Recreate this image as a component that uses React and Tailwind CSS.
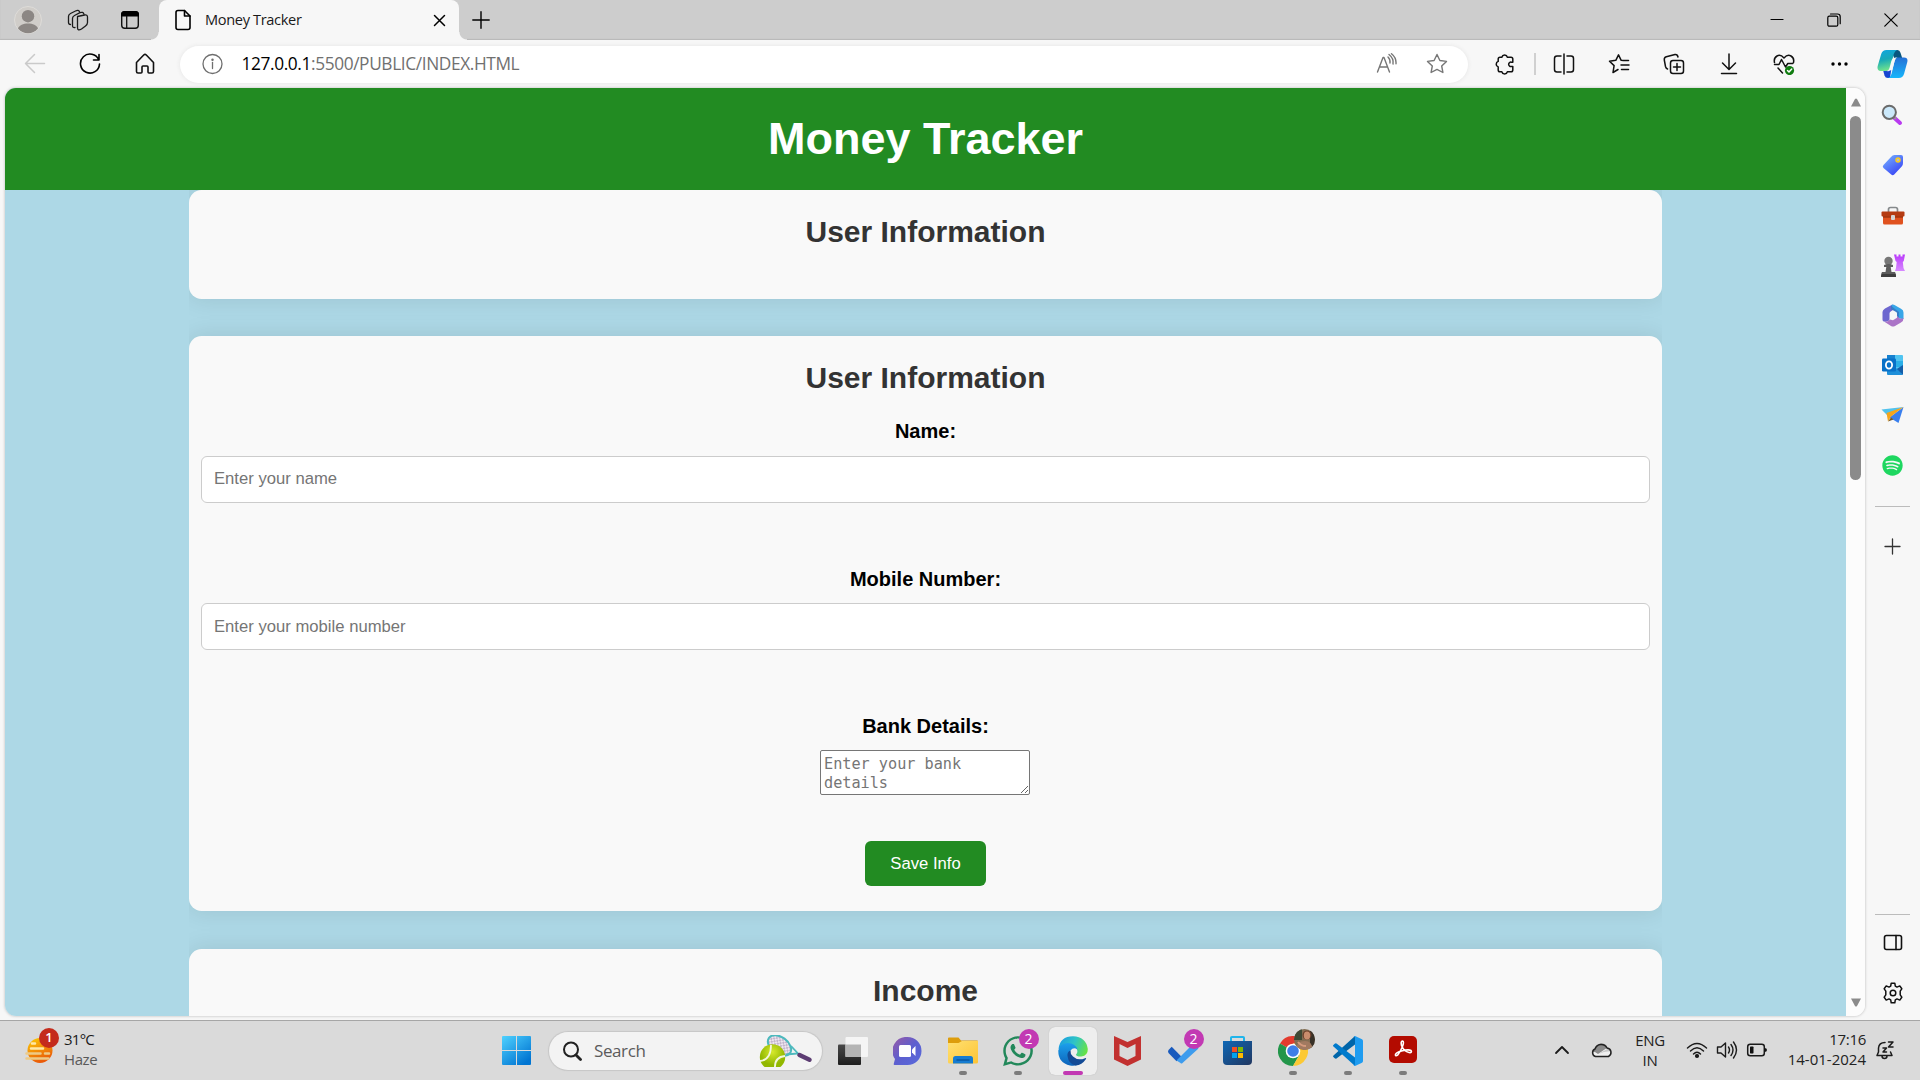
import React from "react";
import { FaSpotify, FaWhatsapp } from "react-icons/fa";

const UI = "font-['Open_Sans','Noto_Sans',sans-serif]";

/* Line icon wrapper: stroke-based svg at its natural pixel size */
function Line({ w = 22, h = 22, sw = 1.4, color = "#1b1b1b", children, className = "" }) {
  return (
    <svg width={w} height={h} viewBox={`0 0 ${w} ${h}`} fill="none" stroke={color} strokeWidth={sw} strokeLinecap="round" strokeLinejoin="round" className={`shrink-0 ${className}`}>
      {children}
    </svg>
  );
}

function Cell({ className, children }) {
  return <div className={`flex shrink-0 items-center justify-center ${className}`}>{children}</div>;
}

/* ---------- Browser title bar ---------- */
function TabStrip() {
  return (
    <div className="flex h-[40px] shrink-0 bg-[#cdcdcd] shadow-[inset_0_-1px_1px_#b9b9b9]">
      <Cell className="w-[56px]">
        <svg width="28" height="28" viewBox="0 0 28 28">
          <circle cx="14" cy="14" r="13.5" fill="#d0cdc9" stroke="#dedcd9" />
          <circle cx="14" cy="10.2" r="6.2" fill="#8c8784" />
          <path d="M4 22.5c1.500-3.500 5-5 10-5s8.500 1.500 10 5a13 13 0 0 1-20 0z" fill="#8c8784" />
        </svg>
      </Cell>
      <Cell className="w-[43px]">
        <Line w={22} h={22} sw={1.3}>
          <path d="M10.500 7.500 17.500 6q3-.6 3 2v5.500q0 2-2 3.500l-4 3q-4 2.300-4-1.500V11q0-2.500 0-3.500z" />
          <path d="M8 18.500q-2.500.5-2.500-2V9.500q0-2 2-3L13 3.700q3-1.200 4 1.500" />
          <path d="M3.500 15.500Q1.500 15.500 1.500 13.500V7.500q0-2 2-3L8.500 2q3-1.500 4 .8" />
        </Line>
      </Cell>
      <Cell className="w-[60px]">
        <svg width="20" height="20" viewBox="0 0 20 20" className="ml-0.5">
          <rect x="1.700" y="1.700" width="16.600" height="16.600" rx="3" fill="none" stroke="#111" strokeWidth="1.400" />
          <path d="M1 6.500V4.500Q1 1 4.500 1h11Q19 1 19 4.500v2z" fill="#000" />
          <path d="M6.700 6v12" stroke="#111" strokeWidth="1.300" />
        </svg>
      </Cell>
      <div className="relative flex w-[300px] shrink-0 items-center rounded-t-[8px] bg-[#f7f7f7] pr-[13px] pl-[15px]">
        <span className="absolute bottom-0 left-[-8px] size-2 bg-[radial-gradient(circle_at_0_0,#cdcdcd_7px,#f7f7f7_8px)]" />
        <span className="absolute right-[-8px] bottom-0 size-2 bg-[radial-gradient(circle_at_100%_0,#cdcdcd_7px,#f7f7f7_8px)]" />
        <Line w={18} h={22} sw={1.6} color="#000">
          <path d="M10.500 1.500H4Q2 1.500 2 3.500v15q0 2 2 2h10q2 0 2-2V7z" />
          <path d="M10.500 1.500V7H16" />
        </Line>
        <span className={`mb-[2px] ml-[13px] text-[14.600px] leading-5 tracking-[-0.350px] text-[#1a1a1a] ${UI}`}>Money Tracker</span>
        <Line w={13} h={13} sw={1.5} color="#000" className="ml-auto">
          <path d="m1.500 1.500 10 10M11.500 1.500l-10 10" />
        </Line>
      </div>
      <Cell className="ml-[11px] w-[22px]">
        <Line w={18} h={18} sw={1.4} color="#000"><path d="M9 .8v16.400M.8 9h16.400" /></Line>
      </Cell>
      <div className="mr-[1px] ml-auto flex">
        <Cell className="w-[57px]"><Line w={14} h={14} sw={1.2} color="#000"><path d="M1 6.500h12" /></Line></Cell>
        <Cell className="w-[57px]">
          <Line w={14} h={14} sw={1.2} color="#000">
            <rect x=".8" y="3.200" width="10" height="10" rx="1.500" />
            <path d="M3.500 1h7q2.700 0 2.700 2.700v7" />
          </Line>
        </Cell>
        <Cell className="w-[57px]"><Line w={14} h={14} sw={1.2} color="#000"><path d="m.8.8 12.400 12.400M13.200.8.8 13.200" /></Line></Cell>
      </div>
    </div>
  );
}

/* ---------- Address / tool bar ---------- */
const STAR = "m11 1.500 2.900 6 6.600.9-4.800 4.600 1.200 6.500-5.900-3.100-5.900 3.100 1.200-6.500L1.500 8.400l6.600-.9z";

function CopilotIcon() {
  return (
    <svg width="31" height="30" viewBox="0 0 31 30">
      <defs>
        <linearGradient id="cpA" x1="0" y1="0" x2="0.200" y2="1"><stop stopColor="#0fa5e0" /><stop offset=".5" stopColor="#17a9b8" /><stop offset="1" stopColor="#6fe28d" /></linearGradient>
        <linearGradient id="cpB" x1="0" y1="0" x2="0" y2="1"><stop stopColor="#2570d6" /><stop offset="1" stopColor="#17b6fb" /></linearGradient>
      </defs>
      <path d="M14 1h6.500q2.200 0 3 2.700L25.500 10h-8z" fill="#08567f" />
      <path d="M5.500 19h9l-1.500 10h-2Q8.300 29 7.500 26.500z" fill="#1746d1" />
      <path d="M9.500 1H20q-2.200.8-3.200 4L13.500 18q-1 3.500-4 4H3.500Q-.3 22 .7 17L4.200 5Q5.500 1 9.500 1z" fill="url(#cpA)" />
      <path d="M20.500 8.500H27q4.300 0 3.300 4.500L27 25q-1.200 4-5.200 4H11q2.500-.8 3.500-4l3-12.500q.8-3.600 3-4z" fill="url(#cpB)" />
      <path d="M18.500 8.500q-3.500.5-4.300 4L12.500 19q-.8 3-3 3 2.500.5 3.500-.5L15.200 21l2.300-8.500q.8-3.600 3-4z" fill="#f7f7f7" />
    </svg>
  );
}

function ToolBar() {
  return (
    <div className="flex h-[48px] shrink-0 items-center bg-[#f7f7f7]">
      <div className="ml-[7px] flex w-[165px]">
        <Cell className="w-[55px]"><Line color="#cacaca" sw={1.5}><path d="M20.500 10.500h-19M10.500 1.500 1.500 10.500l9 9" /></Line></Cell>
        <Cell className="w-[55px]">
          <Line sw={1.6} color="#000"><path d="M19.800 7A9.500 9.500 0 1 0 20.500 11M20 1.500V7h-5.500" /></Line>
        </Cell>
        <Cell className="w-[55px]">
          <Line sw={1.6} color="#111"><path d="M2.500 9.500 9.700 2q1.300-1.200 2.600 0l7.200 7.500v9q0 1.500-1.500 1.500h-3q-1 0-1-1v-5q0-1-1-1h-4q-1 0-1 1v5q0 1-1 1H4q-1.500 0-1.500-1.500z" /></Line>
        </Cell>
      </div>
      <div className="ml-[8px] flex h-[37px] w-[1288px] items-center rounded-full bg-white pr-[20px] pl-[22px] shadow-[0_0_4px_#e4e4e4]">
        <Line color="#6f6f6f" sw={1.3}><circle cx="10.500" cy="11" r="9.500" /><path d="M10.500 9.500v6" /><circle cx="10.500" cy="6.700" r=".6" fill="#6f6f6f" /></Line>
        <span className={`mb-[1px] ml-[17.500px] text-[17.300px] leading-6 tracking-[-0.380px] whitespace-nowrap text-[#707070] ${UI}`}>
          <span className="text-black">127.0.0.1</span>:5500/PUBLIC/INDEX.HTML
        </span>
        <Line color="#767676" sw={1.4} className="ml-auto">
          <path d="m1.500 19 5.500-14.500h1L13.500 19M3.600 14h7.800" />
          <path d="M12 4q2.500 2.500 2 6M13 1.500q5 4 4 9.500" />
          <path d="M15.500.8q5 4 4.500 10" />
        </Line>
        <Line color="#767676" sw={1.4} className="ml-[28px]"><path d={STAR} /></Line>
      </div>
      <Cell className="ml-[9px] w-[55px]">
        <Line sw={1.5} color="#111">
          <path d="M7.800 4.200a2.900 2.900 0 0 1 5.600 0H17q1.800 0 1.800 1.800v3.200h-1.300a2.200 2.200 0 1 0 0 4.200h1.300V17q0 1.800-1.800 1.800h-3.600a2.900 2.900 0 0 1-5.600 0H6q-1.800 0-1.800-1.800v-3.100a2.900 2.900 0 0 1 0-5.500V6q0-1.800 1.800-1.800z" />
        </Line>
      </Cell>
      <span className="ml-[2px] h-[22px] w-[2px] bg-[#d0d0d0]" />
      <div className="flex">
        <Cell className="w-[55px]">
          <Line sw={1.5} color="#111"><path d="M11 1v20M8 3H4Q1.500 3 1.500 5.500v11Q1.500 19 4 19h4M14 3h4q2.500 0 2.500 2.500v11Q20.500 19 18 19h-4" /></Line>
        </Cell>
        <Cell className="w-[55px]">
          <Line sw={1.5} color="#111"><path d="M20.500 7.500h-5L13.200 7.300 10.500 1.800 7.800 7.300l-6.300.9 4.600 4.400L5 19.500l5-3M13 12h8M13.500 16.500h7" /></Line>
        </Cell>
        <Cell className="w-[55px]">
          <Line sw={1.5} color="#111">
            <rect x="7.500" y="7.500" width="13" height="13" rx="2.500" /><path d="M14 10.500v7M10.500 14h7" />
            <path d="M4.500 16Q3 15.500 2.500 13.500L1.300 7Q1 4.500 3.300 3.800L12 1.500q2.500-.3 3 2.500" />
          </Line>
        </Cell>
        <Cell className="w-[55px]"><Line sw={1.5} color="#111"><path d="M11 1v15M4.500 10l6.500 6.500 6.500-6.500M3.500 20.500h15" /></Line></Cell>
        <Cell className="w-[55px]">
          <Line sw={1.5} color="#111">
            <path d="M1.500 9.500Q.5 5 4 3t7 2q3.500-4 7-2t2.500 6.500M1.500 11.500H6l2.500-5 4 7.500 2.300-3.500h5M5 15l4.500 5" />
            <circle cx="16.500" cy="17.500" r="4.600" fill="#107c10" stroke="none" /><path d="m14.500 17.500 1.500 1.500 2.700-3" stroke="#fff" />
          </Line>
        </Cell>
        <Cell className="w-[55px]"><svg width="18" height="6"><circle cx="3" cy="3" r="1.700" /><circle cx="9.500" cy="3" r="1.700" /><circle cx="16" cy="3" r="1.700" /></svg></Cell>
        <Cell className="w-[52px]"><CopilotIcon /></Cell>
      </div>
    </div>
  );
}

/* ---------- Money Tracker page ---------- */
const CARD = "shrink-0 rounded-[12.500px] bg-[#f9f9f9] px-3 pt-6 shadow-[0_0_25px_rgba(0,0,0,0.1)]";
const HEADING = "text-center text-[30px] leading-9 font-bold text-[#333333]";
const LABEL = "block text-center text-[20px] leading-6 font-bold text-black";
const INPUT = "block h-[47px] w-full rounded-[6px] border border-[#cccccc] bg-white px-3 text-[16.670px] text-black placeholder:text-[#757575]";

function Page() {
  return (
    <div className="flex h-[928px] w-[1841px] flex-col overflow-hidden bg-[#add8e6] font-['Liberation_Sans',Arial,sans-serif]">
      <header className="h-[102px] shrink-0 bg-[#228b22] pt-[26px]">
        <h1 className="text-center text-[45px] leading-[50px] font-bold text-white">Money Tracker</h1>
      </header>
      <main className="mx-auto flex w-[1473px] flex-1 flex-col overflow-hidden">
        <section className={`h-[109px] ${CARD}`}><h2 className={HEADING}>User Information</h2></section>
        <section className={`mt-[37px] h-[575px] ${CARD}`}>
          <h2 className={HEADING}>User Information</h2>
          <label className={`mt-[23px] ${LABEL}`}>Name:</label>
          <input className={`mt-[13px] pb-[1px] ${INPUT}`} placeholder="Enter your name" />
          <label className={`mt-[64px] ${LABEL}`}>Mobile Number:</label>
          <input className={`mt-3 ${INPUT}`} placeholder="Enter your mobile number" />
          <label className={`mt-[64px] ${LABEL}`}>Bank Details:</label>
          <textarea
            className="mt-3 ml-[619px] block h-[45px] w-[210px] resize overflow-hidden rounded-[2px] border border-[#767676] bg-white px-[3px] pt-[4px] font-['DejaVu_Sans_Mono',monospace] text-[15.200px] leading-[19px] placeholder:text-[#757575]"
            placeholder="Enter your bank details"
          />
          <button className="mx-auto mt-[46px] block h-[45px] w-[121px] rounded-[6px] bg-[#228b22] text-[16.670px] text-white">Save Info</button>
        </section>
        <section className={`mt-[38px] h-[300px] ${CARD}`}><h2 className={HEADING}>Income</h2></section>
      </main>
    </div>
  );
}

function ScrollBar() {
  return (
    <div className="flex w-[19px] flex-col items-center bg-[#fcfcfc] pt-[10px] pb-[9px]">
      <svg width="12" height="9"><path d="M1 8.500h10L7 1q-1-1-2 0z" fill="#8b8b8b" /></svg>
      <div className="mt-[9px] h-[364px] w-[11px] rounded-full bg-[#8b8b8b]" />
      <svg width="12" height="9" className="mt-auto"><path d="M1 .5h10L7 8Q6 9 5 8z" fill="#8b8b8b" /></svg>
    </div>
  );
}

/* ---------- Browser sidebar ---------- */
function SideIcon({ children }) {
  return <div className="flex h-[50px] shrink-0 items-center justify-center">{children}</div>;
}

function SideBar() {
  return (
    <aside className="flex w-[55px] flex-col pt-[2px]">
      <SideIcon>
        <svg width="22" height="22" viewBox="0 0 22 22" className="mr-[2px]"><path d="m13.500 14 5.500 5" stroke="#b93af0" strokeWidth="4" strokeLinecap="round" /><path d="m12 12 3 3" stroke="#999" strokeWidth="2" /><circle cx="8.300" cy="8.300" r="6.600" fill="#cbe8fa" stroke="#6b6b6b" strokeWidth="2" /></svg>
      </SideIcon>
      <SideIcon>
        <svg width="22" height="22" viewBox="0 0 22 22">
          <defs><linearGradient id="tag" x1="0" y1="0" x2=".7" y2="1"><stop stopColor="#79b8ff" /><stop offset="1" stopColor="#3843f5" /></linearGradient></defs>
          <path d="M12.500 1H19q2 0 2 2v6q0 2-1.300 3.500l-7.500 8q-1.500 1.300-3 0L1.500 14q-1.500-1.500 0-3L9 3q1.500-2 3.500-2z" fill="url(#tag)" /><circle cx="16" cy="6" r="2" fill="#b8bdc9" stroke="#fccb1a" strokeWidth="1.500" />
        </svg>
      </SideIcon>
      <SideIcon>
        <svg width="24" height="20" viewBox="0 0 24 20" className="mt-[2px]">
          <path d="M7.500 6V3.500q0-2 2-2h5q2 0 2 2V6" fill="none" stroke="#85898b" strokeWidth="1.700" />
          <path d="M2 9h20v8q0 1.500-1.500 1.500h-17Q2 18.500 2 17z" fill="#e0521f" /><rect x=".5" y="5.500" width="23" height="5" rx="1" fill="#b53b12" /><path d="M2 10.500h20v1H2z" fill="#852706" /><rect x="10" y="9" width="4" height="5" rx="1" fill="#d4d4d4" />
        </svg>
      </SideIcon>
      <SideIcon>
        <svg width="24" height="24" viewBox="0 0 24 24" className="mt-[2px]">
          <defs><linearGradient id="rook" x1="0" y1="0" x2="0" y2="1"><stop stopColor="#b938fb" /><stop offset="1" stopColor="#d78bff" /></linearGradient></defs>
          <path d="M13 .5h2.500v2h2v-2h2v2h2v-2H24L22.800 7l-1 1 .7 6L24 17H14l1-3 .7-6-1.200-1z" fill="url(#rook)" />
          <circle cx="7.500" cy="7" r="4.200" fill="#777" /><path d="M3 11q4.500-2 9 0v2h-2.300l.8 5H14q1 1 1 5H0q0-4 1-5h3.500l.8-5H3z" fill="#5d5d5d" /><path d="M1 20h13.500q.5 1 .5 3H0q0-2 1-3z" fill="#3e3e3e" />
        </svg>
      </SideIcon>
      <SideIcon>
        <svg width="22" height="23" viewBox="0 0 22 23">
          <path d="M10.500.5 3 4.500Q.5 6 .5 8v7.500q0 2.500 3.500 2.200 3.500-.7 3.500-2.700V9.500q0-1.500 1.500-2.300L14 4z" fill="#6d67cf" />
          <path d="M9.500 1q1.500-1 3 0L19 4.800q2.500 1.200 2.500 3.700v6.500Q17 15.500 15 12V9.500q0-1.500-1.500-2L9 5z" fill="#38a6e8" />
          <path d="M21.500 14q.2 3-2.500 4.500l-6 3.500q-2 1-4 0L2 17.500q3.500 1 6-2l3 .8 4-2.500v-2Q17.500 16 21.500 14z" fill="#ab74c7" />
          <path d="M9 1.500v3.700L15 8.500V12l2 2V8l-4-3z" fill="#37358b" opacity=".35" />
        </svg>
      </SideIcon>
      <SideIcon>
        <svg width="22" height="22" viewBox="0 0 22 22">
          <rect x="5" y="1" width="16" height="19" rx="1" fill="#50c4f1" /><path d="M5 1h8v7H5z" fill="#1681cf" /><path d="M13 7h8v6h-8z" fill="#2aafe8" /><path d="m21 11-7 4.500 7 5.500z" fill="#145ea9" /><path d="M5 14h9l7 7H6q-1 0-1-1z" fill="#1e8fd9" />
          <rect x="0" y="4.500" width="14" height="13" rx="1.200" fill="#0871c8" /><ellipse cx="7" cy="11" rx="3.100" ry="3.600" fill="none" stroke="#fff" strokeWidth="1.800" />
        </svg>
      </SideIcon>
      <SideIcon>
        <svg width="23" height="18" viewBox="0 0 23 18"><path d="M22.500 1 .5 3.500 6 9z" fill="#51c2ed" /><path d="m22.500 1-5 16-9-5.500z" fill="#397fee" /><path d="M22.500 1 5.500 7 7 15.500l3-5z" fill="#f6a51b" /><path d="m7 15.500 3-4 2.500 2z" fill="#755a2b" /></svg>
      </SideIcon>
      <SideIcon><FaSpotify size={21} color="#1ed760" /></SideIcon>
      <div className="mx-[10px] mt-[16px] h-px shrink-0 bg-[#bcbcbc]" />
      <div className="mt-[31px] flex justify-center"><Line w={17} h={17} sw={1.3} color="#333" className="mr-[1px]"><path d="M8.500 1v15M1 8.500h15" /></Line></div>
      <div className="mx-[10px] mt-auto h-px shrink-0 bg-[#bcbcbc]" />
      <div className="flex h-[55px] shrink-0 items-center justify-center"><Line w={20} h={17} sw={1.6} color="#111"><rect x="1.500" y="1.500" width="17" height="14" rx="2" /><path d="M13 1.500v14" /></Line></div>
      <div className="mb-[4px] flex h-[46px] shrink-0 items-center justify-center">
        <Line sw={1.5} color="#111">
          <circle cx="11" cy="11" r="2.800" />
          <path d="M9.200 1.200h3.600l.5 2.900 1.700 1 2.800-1.200 2 2.900-1.600 2.400v3.600l1.600 2.400-2 2.900-2.800-1.200-1.700 1-.5 2.900H9.200l-.5-2.900-1.700-1-2.800 1.200-2-2.900 1.600-2.400V9.200L2.200 6.800l2-2.900L7 5.100l1.700-1z" />
        </Line>
      </div>
    </aside>
  );
}

/* ---------- Windows taskbar ---------- */
function TaskApp({ running, active, badge, children }) {
  return (
    <div className="flex h-full w-[55px] shrink-0 items-center justify-center">
      <div className={`relative flex h-[48px] w-[48px] items-center justify-center rounded-[6px] ${active ? "bg-[#eeeeee] shadow-[0_0_1px_#aaa]" : ""}`}>
        {children}
        {badge && <span className={`absolute top-[2px] left-[25px] flex size-5 items-center justify-center rounded-full bg-[#c239b3] text-[14px] leading-none text-white ${UI}`}>{badge}</span>}
        {running && <span className="absolute bottom-0 left-[20px] h-1 w-2 rounded-full bg-[#7c7c7c]" />}
        {active && <span className="absolute bottom-0 left-[14px] h-1 w-5 rounded-full bg-[#c239b3]" />}
      </div>
    </div>
  );
}

function WindowsLogo() {
  return (
    <svg width="29" height="29" viewBox="0 0 29 29">
      <defs><linearGradient id="win" gradientUnits="userSpaceOnUse" x1="0" y1="0" x2="22" y2="28"><stop stopColor="#4fd2ff" /><stop offset="1" stopColor="#0175d2" /></linearGradient></defs>
      <path d="M1 0h13v14H0V1q0-1 1-1zM15 0h13q1 0 1 1v13H15zM0 15h14v14H1q-1 0-1-1zM15 15h14v13q0 1-1 1H15z" fill="url(#win)" />
    </svg>
  );
}

function Racket() {
  return (
    <svg width="54" height="32" viewBox="0 0 54 32">
      <defs>
        <pattern id="net" width="4" height="4" patternUnits="userSpaceOnUse"><rect width="4" height="4" fill="#eee7ef" /><path d="M0 0l4 4M4 0 0 4" stroke="#b9a8c4" strokeWidth=".8" /></pattern>
        <radialGradient id="ball" cx=".5" cy=".3"><stop stopColor="#d6e92d" /><stop offset="1" stopColor="#92b800" /></radialGradient>
      </defs>
      <ellipse cx="20.500" cy="10.500" rx="13" ry="8.500" transform="rotate(36 20.500 10.500)" fill="url(#net)" stroke="#4cb9bd" strokeWidth="2" />
      <path d="m32 11 7 7.500-12 1" fill="none" stroke="#4cb9bd" strokeWidth="1.800" />
      <path d="m40.500 20 10 4.700" stroke="#5c3c72" strokeWidth="4.500" strokeLinecap="round" />
      <circle cx="13.500" cy="22" r="12.700" fill="url(#ball)" />
      <path d="M1 26q11-1 11-16M16 34q-1-12 10-13" fill="none" stroke="#f3f7dc" strokeWidth="1.800" />
    </svg>
  );
}

function EdgeIcon() {
  return (
    <svg width="30" height="30" viewBox="0 0 30 30">
      <defs>
        <linearGradient id="eg1" x1="0" y1=".3" x2="1" y2=".6"><stop stopColor="#1b9de2" /><stop offset=".5" stopColor="#2fc4c6" /><stop offset="1" stopColor="#67e345" /></linearGradient>
        <linearGradient id="eg2" x1="0" y1="0" x2="0" y2="1"><stop stopColor="#1ca0ec" /><stop offset="1" stopColor="#0d63ba" /></linearGradient>
      </defs>
      <path d="M.5 13Q2 .3 15 .3 28 .8 29.800 13q.2 6.500-6.500 7.500-5 .2-5.300-2 2.500-2.500.5-6Q13 6 .5 13z" fill="url(#eg1)" />
      <path d="M.3 14.500Q1.500 7.500 9.500 7q8 .2 10 6.500-4-3-7 1-3.500 6 4 12l5 1.500q-4 2.500-9.500 1.500Q0 27 .3 14.500z" fill="url(#eg2)" />
      <path d="M12.500 14.500Q9 15.500 9.500 20q1 8 8 9.500 6.500-.5 10.500-6.500.5-1.500-1-.8-7 3-12-1.700-3-3-2.500-6z" fill="#134b96" />
    </svg>
  );
}

function ChromeIcon() {
  return (
    <svg width="30" height="30" viewBox="0 0 30 30">
      <path d="M15 15 2 7.500A15 15 0 0 1 28 7.500H15z" fill="#e33b2e" />
      <path d="M15 15 2 7.500A15 15 0 0 0 15 30l6.500-11.200z" fill="#23964a" />
      <path d="M15 7.500h13A15 15 0 0 1 15 30l6.500-11.200z" fill="#fcc934" />
      <circle cx="15" cy="15" r="7.300" fill="#fff" /><circle cx="15" cy="15" r="5.800" fill="#3f7ee8" />
    </svg>
  );
}

function Avatar() {
  return (
    <svg width="21" height="21" viewBox="0 0 21 21" className="absolute top-[2px] left-[25px]">
      <defs><clipPath id="av"><circle cx="10.500" cy="10.500" r="10.500" /></clipPath></defs>
      <g clipPath="url(#av)">
        <path d="M0 0h21v21H0z" fill="#836d52" /><path d="M0 0h8v11H0z" fill="#3d4935" /><path d="M16 0h5v21h-5z" fill="#373027" />
        <circle cx="13" cy="6" r="4.500" fill="#6b3f2b" /><ellipse cx="13" cy="6.500" rx="3.200" ry="4" fill="#c98d6d" /><path d="M2 21q0-9 9-9 7 0 8 9z" fill="#a17a60" /><path d="M4 13q3 4 8 4" stroke="#d59a7d" strokeWidth="2" fill="none" />
      </g>
    </svg>
  );
}

function TaskBar() {
  return (
    <footer className={`flex h-[60px] shrink-0 border-t border-[#a6a6a6] bg-[#dadada] ${UI}`}>
      <div className="flex w-[489px] items-center pl-[25px]">
        <div className="relative h-[26px] w-7">
          <svg width="28" height="26" viewBox="0 0 28 26">
            <defs><linearGradient id="sun" x1="0" y1="0" x2=".4" y2="1"><stop stopColor="#fcce05" /><stop offset="1" stopColor="#ea5b09" /></linearGradient></defs>
            <circle cx="15" cy="12.500" r="12.500" fill="url(#sun)" />
            <path d="M7 5.500h3M6 10.500h12" stroke="#ffe9a6" strokeWidth="2.500" strokeLinecap="round" /><path d="M1.500 15.500h14M20 15.500h4M1.500 20.500h22" stroke="#edca86" strokeWidth="2.500" strokeLinecap="round" />
          </svg>
          <span className="absolute top-[-10px] left-[14px] flex size-5 items-center justify-center rounded-full bg-[#c42b1c] text-[13px] leading-none font-semibold text-white">1</span>
        </div>
        <div className="mb-[4px] ml-[11px] text-[15px] leading-5"><div className="tracking-[-0.750px] text-[#1c1c1c]">31°C</div><div className="tracking-[-0.400px] text-[#595959]">Haze</div></div>
      </div>
      <Cell className="w-[55px]"><WindowsLogo /></Cell>
      <div className="mx-[5px] flex h-[38px] w-[273px] items-center self-center rounded-full bg-[#f3f3f3] pr-[9px] pl-[13px] shadow-[0_0_1px_1px_#c6c6c6]">
        <Line w={20} h={20} sw={2} color="#222"><circle cx="9" cy="8.500" r="7" /><path d="m14 14 4.500 4.500" strokeWidth="2.800" /></Line>
        <span className="ml-[12px] text-[17px] leading-6 tracking-[-0.400px] text-[#5b5b5b]">Search</span>
        <div className="ml-auto"><Racket /></div>
      </div>
      <div className="ml-[-2px] flex">
        <TaskApp>
          <svg width="30" height="28" viewBox="0 0 30 28"><defs><linearGradient id="tv" x1="0" y1="0" x2="0" y2="1"><stop stopColor="#484848" /><stop offset="1" stopColor="#1e1e1e" /></linearGradient></defs><rect y="7.500" width="23" height="20.500" rx="1" fill="url(#tv)" /><rect x="7.500" width="22.500" height="20" rx="1" fill="#f5f5f5" /><path d="M7.500 7.500H23V20H7.500z" fill="#b4b4b4" /></svg>
        </TaskApp>
        <TaskApp>
          <svg width="29" height="28" viewBox="0 0 29 28"><defs><linearGradient id="chat" x1="0" y1="0" x2="1" y2="1"><stop stopColor="#9a5aa5" /><stop offset=".5" stopColor="#5d5fcf" /><stop offset="1" stopColor="#586bdc" /></linearGradient></defs><path d="M14.500 0a14 14 0 1 1 0 28H1.500q-1 0-.8-1l1.300-5A14 14 0 0 1 14.500 0z" fill="url(#chat)" /><rect x="6" y="8" width="12" height="12" rx="1.500" fill="#fff" /><path d="M19 12.500 22.500 9v10L19 15.500z" fill="#fff" /></svg>
        </TaskApp>
        <TaskApp running>
          <svg width="30" height="27" viewBox="0 0 30 27"><defs><linearGradient id="fold" x1="0" y1="0" x2="1" y2="1"><stop stopColor="#ffe071" /><stop offset="1" stopColor="#fdc435" /></linearGradient></defs><path d="M0 1.500Q0 .5 1 .5h9.500l2.500 3h16q1 0 1 1V7H0z" fill="#dd9d0c" /><path d="M0 6h10.500L14 4h16v21q0 1.500-1.500 1.500h-27Q0 26.500 0 25z" fill="url(#fold)" /><path d="M5 26.500v-5Q5 19 7.500 19h15q2.500 0 2.500 2.500v5z" fill="#167cd1" /><path d="M8.500 23h13" stroke="#0957a0" strokeWidth="1.500" /></svg>
        </TaskApp>
        <TaskApp running badge="2"><FaWhatsapp size={34} color="#22885a" className="shrink-0" /></TaskApp>
        <TaskApp active><EdgeIcon /></TaskApp>
        <TaskApp><svg width="27" height="30" viewBox="0 0 27 30"><path d="M0 0 13.500 6 27 0v23.500L13.500 30 0 23.500zM5.500 8v12l8 4 8-4V8l-8 4z" fill="#c23130" fillRule="evenodd" /></svg></TaskApp>
        <TaskApp badge="2"><svg width="32" height="26" viewBox="0 0 32 26"><path d="m3.500 11 3.200-3.200 9.600 9.700-4.800 4.800L3.500 14q-1-1.500 0-3z" transform="translate(-2 1)" fill="#195abd" /><path d="m9.500 22.500 17-17 5 5-16 14.500q-1 1-2 0z" fill="#3e9ced" /></svg></TaskApp>
        <TaskApp>
          <svg width="29" height="29" viewBox="0 0 29 29"><defs><linearGradient id="store" x1="0" y1="0" x2="1" y2="1"><stop stopColor="#0e67b5" /><stop offset="1" stopColor="#213760" /></linearGradient></defs><path d="M8 6V1.800Q8 1 9 1h11q1 0 1 .8V6" fill="none" stroke="#20b5eb" strokeWidth="2" /><path d="M0 5h29v20q0 4-4 4H4q-4 0-4-4z" fill="url(#store)" /><path d="M9 11h5v5H9z" fill="#f25022" /><path d="M15 11h5v5h-5z" fill="#7fba00" /><path d="M9 17h5v5H9z" fill="#00a4ef" /><path d="M15 17h5v5h-5z" fill="#ffb900" /></svg>
        </TaskApp>
        <TaskApp running><ChromeIcon /><Avatar /></TaskApp>
        <TaskApp running>
          <svg width="30" height="30" viewBox="0 0 30 30"><path d="M.5 19.500 22 0v8.500L3.500 22.500q-1 .5-1.800-.3L.4 21q-.8-.8.1-1.500z" fill="#0065a9" /><path d="M.5 10.500 22 30v-8.500L3.500 7.500q-1-.5-1.800.3L.4 9q-.8.8.1 1.500z" fill="#007acc" /><path d="M22 0l7 3.300q1 .5 1 1.700v20q0 1.200-1 1.700L22 30q-1 .3-1.500-.5 1.500.5 1.500-1.500V2q0-2-1.500-1.500Q21-.2 22 0z" fill="#1f9cf0" /></svg>
        </TaskApp>
        <TaskApp running>
          <svg width="28" height="27" viewBox="0 0 28 27" className="mb-[3px]"><rect width="28" height="27" rx="5" fill="#b30b00" /><path d="M6.500 19.500q-1-2.500 6-4.500 7-2 9.500-.5 1.500 2.500-2 2-5-1-7.500-7-1-4.500 1-4.500 2 .5-.2 6Q10.500 17 8.500 19.200q-1.200 1-2 .3z" fill="none" stroke="#fff" strokeWidth="1.600" /></svg>
        </TaskApp>
      </div>
      <div className="ml-auto flex items-center pr-[25px] pb-[1px]">
        <Line w={16} h={10} sw={1.8}><path d="m2 8 6-6 6 6" /></Line>
        <svg width="22" height="16" viewBox="0 0 22 16" className="ml-[21px]"><path d="M4.500 14.500a4 4 0 0 1-.5-7.500 6.500 6.500 0 0 1 12-1 4.500 4.500 0 0 1 1.500 8.500z" fill="#f0f0f0" /><path d="M1.500 10Q1 7.500 4.500 6.500q1.500-5 6-5t6 4L7 12Q3 9 1.500 10z" fill="#8b8b8b" /><path d="m7 12 9.500-5 4 2L13 10z" fill="#c8c8c8" /><path d="M4.500 14.500a4 4 0 0 1-.5-7.500 6.500 6.500 0 0 1 12-1 4.500 4.500 0 0 1 1.500 8.500z" fill="none" stroke="#222" strokeWidth="1.500" /></svg>
        <div className="mb-[1px] ml-[22px] w-[30px] text-center text-[15px] leading-[20px] tracking-[-0.300px] text-[#222]">ENG<br />IN</div>
        <Line w={22} h={18} sw={1.4} className="ml-[21px]"><path d="M1.500 7q9.500-9 19 0M4.500 10q6.500-6.500 13 0M7.500 13q3.500-3.500 7 0" /><circle cx="11" cy="15" r="1.400" fill="#1b1b1b" /></Line>
        <Line w={22} h={18} sw={1.4} className="ml-[8px]"><path d="M1.500 6H5l4.500-4v14L5 12H1.500zM12.500 6q2 3 0 6M15 3.500q4 5.500 0 11M17.500 1q6 8 0 16" /></Line>
        <svg width="22" height="16" viewBox="0 0 22 16" className="ml-[8px]"><rect x="1.700" y="2.200" width="16.600" height="11.600" rx="2.500" fill="none" stroke="#1b1b1b" strokeWidth="1.500" /><rect x="4" y="4.500" width="3.500" height="7" rx=".7" fill="#111" /><path d="M18.500 6q2.500 0 2.500 2t-2.500 2z" fill="#111" /></svg>
        <div className="mb-[3px] ml-[10px] w-[88px] text-right text-[15px] leading-5 text-[#222]"><div className="tracking-[-0.300px]">17:16</div><div>14-01-2024</div></div>
        <svg width="20" height="20" viewBox="0 0 20 20" className="mb-[1px] ml-[9px]" fill="none" stroke="#1b1b1b" strokeWidth="1.500" strokeLinecap="round" strokeLinejoin="round"><path d="M10 2.500Q4 2.500 3.500 8v4L2 15.500h15L15.500 12M7 16q0 2.500 2.500 2.500T12 16M8 8h3.500L8 12h3.500M13.500 2H18l-4.500 5H18" /></svg>
      </div>
    </footer>
  );
}

export default function App() {
  return (
    <div className="flex h-[1080px] w-[1920px] flex-col overflow-hidden bg-[#f7f7f7]">
      <TabStrip />
      <ToolBar />
      <div className="flex h-[932px] shrink-0 pl-[5px]">
        <div className="flex h-[928px] w-[1860px] shrink-0 overflow-hidden rounded-[11px] shadow-[0_0_3px_#b5b5b5]">
          <Page />
          <ScrollBar />
        </div>
        <SideBar />
      </div>
      <TaskBar />
    </div>
  );
}
